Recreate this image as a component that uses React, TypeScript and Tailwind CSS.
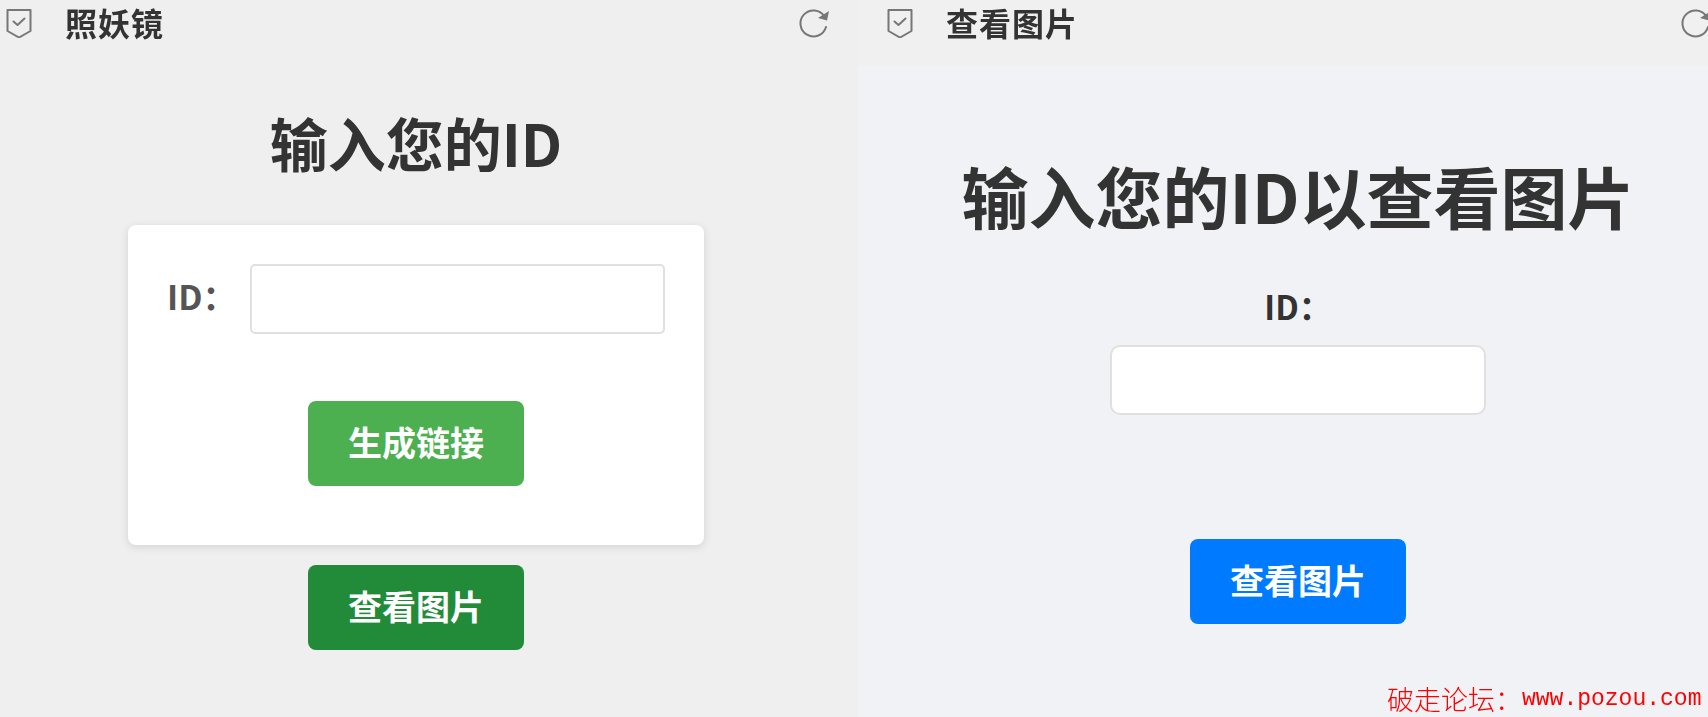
const cjk = "font-['Noto_Sans_CJK_SC','Noto_Sans',sans-serif]"

function ShieldIcon() {
  return (
    <svg className="w-[26px] h-[30px] text-[#777] shrink-0" viewBox="0 0 26 30" fill="none" stroke="currentColor" strokeWidth={2}>
      <path d="M1.5 2h23v21L13 29.5 1.5 23z" strokeLinejoin="round" />
      <path d="M7.5 13.5l4 3.5 7-6.5" strokeLinecap="round" strokeLinejoin="round" />
    </svg>
  )
}

function RefreshIcon() {
  return (
    <svg className="w-[32px] h-[30px] text-[#777] shrink-0" viewBox="0 0 32 30" fill="none" stroke="currentColor" strokeWidth={2}>
      <path d="M26.5 8.5A13 13 0 1 0 28 19" strokeLinecap="round" />
      <path d="M31 3l-2 9.5-9-2.5z" fill="currentColor" stroke="none" />
    </svg>
  )
}

function TitleBar({ title }: { title: string }) {
  return (
    <div className="h-[66px] shrink-0 flex items-center pb-[20px]">
      <ShieldIcon />
      <span className="ml-[33px] mb-[2px] text-[32px] leading-[46px] tracking-[1px] font-bold text-[#333]">{title}</span>
    </div>
  )
}

function ActionButton({ label, color }: { label: string; color: string }) {
  return (
    <button className={`w-[216px] h-[85px] rounded-[8px] text-white text-[34px] leading-none font-bold pb-[3px] ${color}`}>
      {label}
    </button>
  )
}

export default function App() {
  return (
    <div className={`relative w-[1708px] h-[717px] overflow-hidden flex ${cjk}`}>
      <div className="w-[858px] shrink-0 bg-[#efefef] flex flex-col blur-[0.6px]">
        <div className="pl-[6px] pr-[28px] relative">
          <TitleBar title="照妖镜" />
          <div className="absolute right-[28px] top-[8px]"><RefreshIcon /></div>
        </div>
        <div className="w-[832px] flex flex-col items-center">
          <h1 className="mt-[36px] text-[58px] leading-[80px] font-bold text-[#333]">输入您的ID</h1>
          <div className="mt-[43px] w-[576px] h-[320px] bg-white rounded-[8px] shadow-[0_2px_8px_rgba(0,0,0,0.12)] px-[39px] pt-[39px] flex flex-col">
            <div className="flex items-center justify-between">
              <label className="text-[34px] leading-[64px] font-semibold text-[#555] pb-[6px]">ID{"\uFF1A"}</label>
              <input className="w-[415px] h-[70px] bg-white border-2 border-[#e0e0e0] rounded-[5px]" />
            </div>
            <div className="mt-[67px] flex justify-center">
              <ActionButton label="生成链接" color="bg-[#4caf50]" />
            </div>
          </div>
          <div className="mt-[20px]">
            <ActionButton label="查看图片" color="bg-[#228b3a]" />
          </div>
        </div>
      </div>

      <div className="flex-1 bg-[#f0f2f5] flex flex-col blur-[0.6px]">
        <div className="pl-[29px] bg-[#f0f0f0] relative">
          <TitleBar title="查看图片" />
          <div className="absolute left-[822px] top-[8px]"><RefreshIcon /></div>
        </div>
        <div className="pl-[30px] flex flex-col items-center">
          <h1 className="mt-[81px] text-[67px] leading-[96px] font-bold text-[#333]">输入您的ID以查看图片</h1>
          <label className="mt-[41px] text-[33px] leading-[44px] font-bold text-[#333]">ID{"\uFF1A"}</label>
          <input className="mt-[17px] w-[376px] h-[70px] bg-white border-2 border-[#e0e0e0] rounded-[10px]" />
          <div className="mt-[124px]">
            <ActionButton label="查看图片" color="bg-[#007bff]" />
          </div>
        </div>
      </div>

      {/* forum watermark */}
      <div className="absolute left-[1387px] top-[683px] flex items-center text-[#ff0000] text-[27px] leading-[32px] whitespace-nowrap">
        <span className="w-[135px] font-light">破走论坛{"\uFF1A"}</span>
        <span className="font-['Liberation_Mono',monospace] text-[23px]">www.pozou.com</span>
      </div>
    </div>
  )
}
